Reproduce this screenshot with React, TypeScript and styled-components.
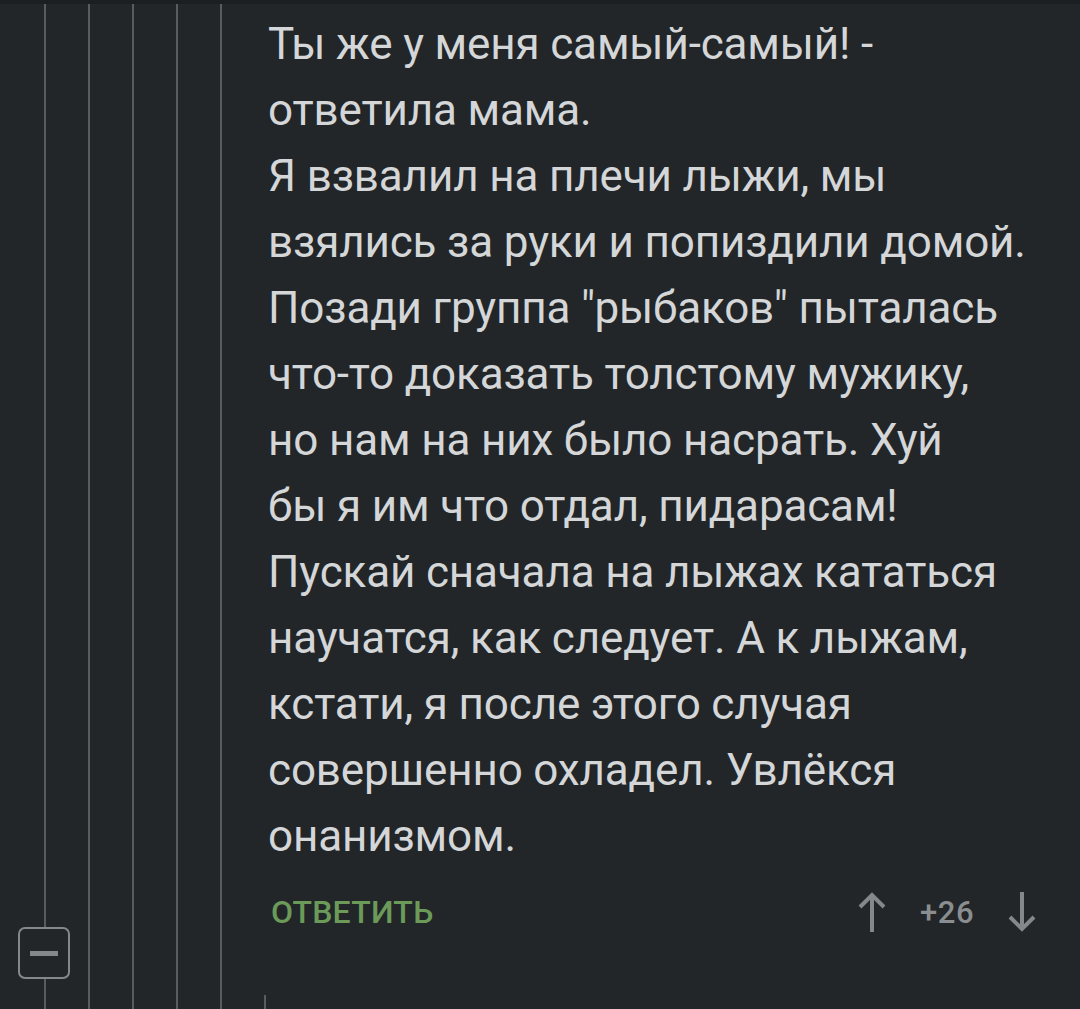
import React from 'react';
import styled, { createGlobalStyle } from 'styled-components';

const lines = [
  'Ты же у меня самый-самый! -',
  'ответила мама.',
  'Я взвалил на плечи лыжи, мы',
  'взялись за руки и попиздили домой.',
  'Позади группа "рыбаков" пыталась',
  'что-то доказать толстому мужику,',
  'но нам на них было насрать. Хуй',
  'бы я им что отдал, пидарасам!',
  'Пускай сначала на лыжах кататься',
  'научатся, как следует. А к лыжам,',
  'кстати, я после этого случая',
  'совершенно охладел. Увлёкся',
  'онанизмом.',
];

const ArrowIcon = ({ down }: { down?: boolean }) => (
  <svg width="30" height="42" viewBox="0 0 30 42" fill="none">
    <g transform={down ? 'rotate(180 15 21)' : undefined}>
      <path d="M15 41V4" stroke="currentColor" strokeWidth="4" />
      <path d="M3 16L15 4L27 16" stroke="currentColor" strokeWidth="4" />
    </g>
  </svg>
);

export default function App() {
  return (
    <>
      <GlobalStyle />
      <Page>
        <TopBar />
        <Main>
          <Rail>
            <RailColumn>
              <ThreadLine />
              <CollapseButton>
                <Minus />
              </CollapseButton>
              <ThreadLine $height={30} />
            </RailColumn>
            {[0, 1, 2, 3].map((i) => (
              <RailColumn key={i}>
                <ThreadLine />
              </RailColumn>
            ))}
          </Rail>
          <Body>
            <Text>
              {lines.map((l, i) => (
                <Line key={i}>{l}</Line>
              ))}
            </Text>
            <Actions>
              <Reply>ОТВЕТИТЬ</Reply>
              <Votes>
                <VoteButton>
                  <ArrowIcon />
                </VoteButton>
                <Score>+26</Score>
                <VoteButton>
                  <ArrowIcon down />
                </VoteButton>
              </Votes>
            </Actions>
            <Spacer />
            <NextThread />
          </Body>
        </Main>
      </Page>
    </>
  );
}

const GlobalStyle = createGlobalStyle`
  html, body {
    margin: 0;
    padding: 0;
    background: #222629;
  }
  body {
    font-family: Roboto, "Noto Sans", sans-serif;
  }
`;

const Page = styled.div`
  display: flex;
  flex-direction: column;
  height: 1009px;
  background: #222629;
  overflow: hidden;
`;

const TopBar = styled.div`
  height: 4px;
  background: #1c1f22;
  flex-shrink: 0;
`;

const Main = styled.div`
  flex: 1;
  display: flex;
  min-height: 0;
`;

const Rail = styled.div`
  display: flex;
  padding-left: 23px;
`;

const RailColumn = styled.div`
  width: 44px;
  display: flex;
  flex-direction: column;
  align-items: center;
`;

const ThreadLine = styled.div<{ $height?: number }>`
  width: 2px;
  background: #585c60;
  ${(p) => (p.$height ? `height: ${p.$height}px; flex-shrink: 0;` : 'flex: 1;')}
`;

const CollapseButton = styled.div`
  width: 52px;
  height: 52px;
  box-sizing: border-box;
  border: 2px solid #85888b;
  border-radius: 7px;
  display: flex;
  align-items: center;
  justify-content: center;
  flex-shrink: 0;
  margin-left: -3px;
`;

const Minus = styled.div`
  width: 28px;
  height: 5px;
  background: #85888b;
`;

const Body = styled.div`
  flex: 1;
  display: flex;
  flex-direction: column;
  padding: 7px 43px 0 25px;
`;

const Text = styled.div`
  font-size: 44px;
  line-height: 66px;
  letter-spacing: -0.15px;
  color: #d4d6d8;
`;

const Line = styled.div`
  white-space: nowrap;
`;

const Actions = styled.div`
  height: 86px;
  display: flex;
  align-items: center;
  justify-content: space-between;
`;

const Reply = styled.span`
  font-size: 32px;
  font-weight: 500;
  color: #6b9a59;
  padding-left: 3px;
  letter-spacing: 0.2px;
`;

const Votes = styled.div`
  display: flex;
  align-items: center;
  gap: 33px;
  color: #84888b;
`;

const VoteButton = styled.div`
  display: flex;
  color: #84888b;
`;

const Score = styled.span`
  font-size: 31px;
  font-weight: 500;
  letter-spacing: 0.5px;
  color: #8a8e91;
`;

const Spacer = styled.div`
  flex: 1;
`;

const NextThread = styled.div`
  width: 2px;
  height: 14px;
  margin-left: -4px;
  background: #585c60;
`;
